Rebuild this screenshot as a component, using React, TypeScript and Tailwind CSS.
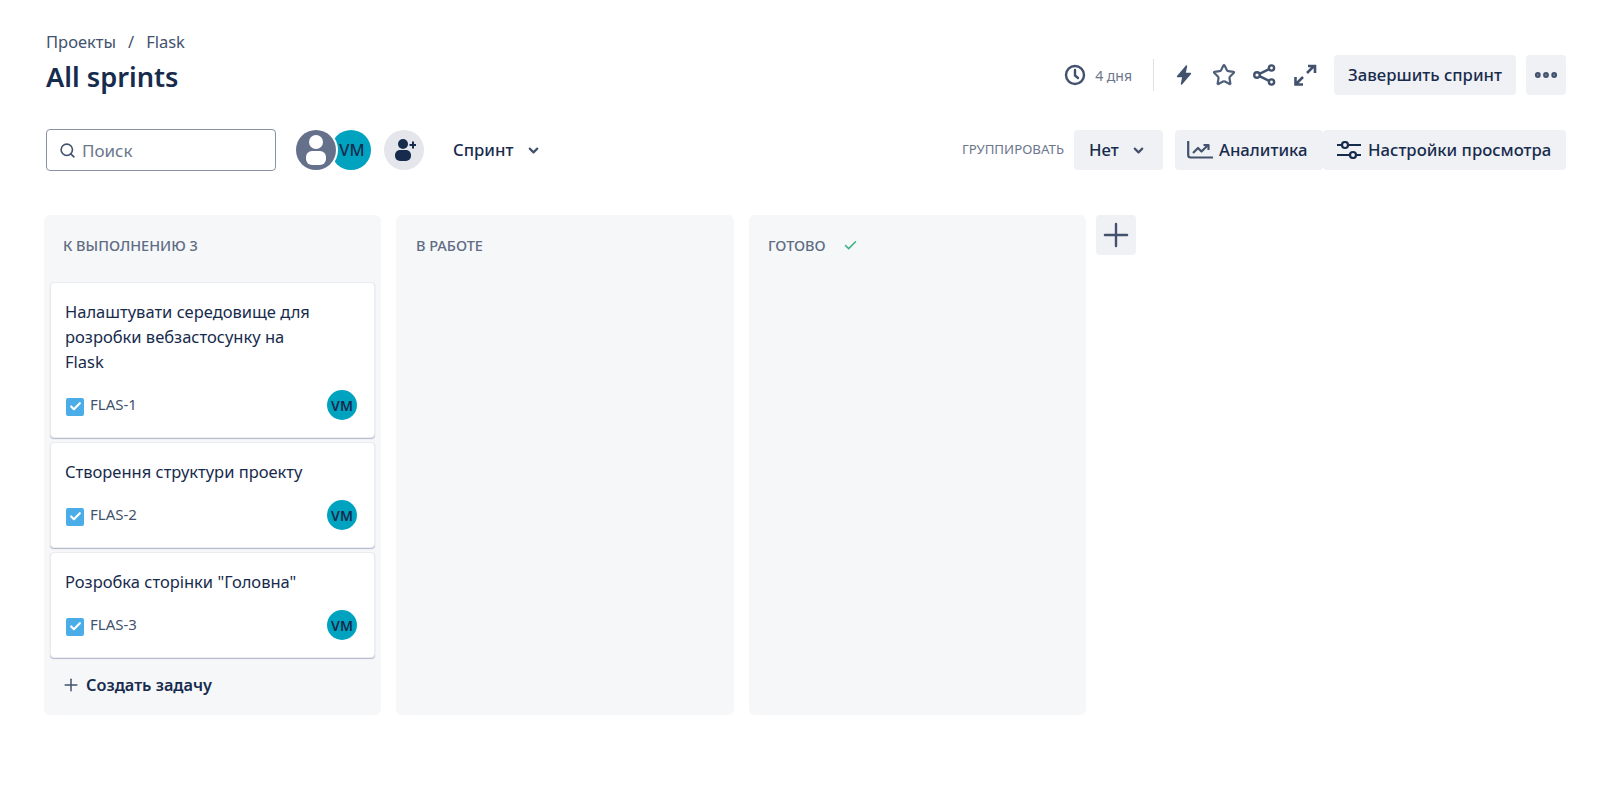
import React from 'react';
import { Check, ChevronDown, Ellipsis, Plus, Search, Star } from 'lucide-react';

const font = { fontFamily: '"Noto Sans", "Open Sans", sans-serif' };

const tasks = [
  { id: 'FLAS-1', title: 'Налаштувати середовище для розробки вебзастосунку на Flask', height: 'h-[156px]' },
  { id: 'FLAS-2', title: 'Створення структури проекту', height: 'h-[106px]' },
  { id: 'FLAS-3', title: 'Розробка сторінки "Головна"', height: 'h-[106px]' },
];

const TaskCard = ({ id, title, height }: { id: string; title: string; height: string }) => (
  <div className={`${height} flex flex-col justify-between rounded-[4px] border border-[#ebecf0] bg-white pt-[16px] pr-[17px] pb-[17px] pl-[15px] shadow-[0_1px_1px_#b3b9c9]`}>
    <div className="-ml-px w-[245px] text-[16.5px] leading-[25px] text-[#172b4d]">{title}</div>
    <div className="flex items-center justify-between">
      <div className="flex items-center gap-[6px]">
        <span className="mt-[3px] flex h-[18px] w-[18px] items-center justify-center rounded-[2px] bg-[#4bade8]">
          <Check size={13} strokeWidth={4} className="text-white" />
        </span>
        <span className="pb-[2px] text-[15px] leading-[18px] text-[#42526e]">{id}</span>
      </div>
      <span className="flex h-[30px] w-[30px] items-center justify-center rounded-full bg-[#00a3bf] text-[14px] font-semibold text-[#172b4d]">VM</span>
    </div>
  </div>
);

const Column = ({ children, className }: { children: React.ReactNode; className: string }) => (
  <div className={`flex h-[500px] flex-col rounded-[6px] bg-[#f6f7f9] ${className}`}>{children}</div>
);

const GrayButton = ({ children, className }: { children: React.ReactNode; className: string }) => (
  <div className={`flex h-[40px] items-center rounded-[4px] bg-[#f0f1f4] text-[16.7px] font-medium text-[#172b4d] ${className}`}>{children}</div>
);

const ClockIcon = () => (
  <svg width="24" height="24" viewBox="0 0 24 24" fill="none" stroke="#42526e" strokeWidth="2.4" strokeLinecap="round" strokeLinejoin="round">
    <circle cx="12" cy="12" r="9" />
    <path d="M12 7v5.5l3 2.5" />
  </svg>
);

const BoltIcon = () => (
  <svg width="24" height="24" viewBox="0 0 24 24" fill="#42526e" stroke="#42526e" strokeWidth="1.4" strokeLinejoin="round">
    <path d="M14.5 3 L5.5 13.5 h5.5 L9.5 21 L18.5 10.5 h-5.5z" />
  </svg>
);

const ShareIcon = () => (
  <svg width="24" height="24" viewBox="0 0 24 24" fill="none" stroke="#42526e" strokeWidth="2.4">
    <circle cx="19.5" cy="5" r="2.6" />
    <circle cx="5" cy="12" r="2.8" />
    <circle cx="19.5" cy="19" r="2.6" />
    <path d="M7.5 10.8l9.6-4.6M7.5 13.2l9.6 4.6" />
  </svg>
);

const ExpandIcon = () => (
  <svg width="24" height="24" viewBox="0 0 24 24" fill="none" stroke="#42526e" strokeWidth="2.6">
    <path d="M14 10l7-7M15 3h7v7" />
    <path d="M10 14l-7 7M2.5 14v7.5H10" />
  </svg>
);

const ChartIcon = () => (
  <svg width="26" height="18" viewBox="0 0 26 18" fill="none" stroke="#42526e" strokeWidth="2.2" strokeLinejoin="round">
    <path d="M1.2 0v14a2.5 2.5 0 0 0 2.5 2.5H26" />
    <path d="M6 12l5-5 3.5 3.5 6-6" />
    <path d="M16.5 4h5v5" />
  </svg>
);

const SlidersIcon = () => (
  <svg width="24" height="18" viewBox="0 0 24 18" fill="none" stroke="#172b4d" strokeWidth="2.2">
    <path d="M0 4h5M11 4h13M0 14h13M19 14h5" />
    <circle cx="8" cy="4" r="3" />
    <circle cx="16" cy="14" r="3" />
  </svg>
);

const AddUserIcon = () => (
  <svg width="24" height="24" viewBox="0 0 24 24" fill="#172b4d">
    <circle cx="11" cy="6" r="5" />
    <rect x="3" y="12" width="16" height="11" rx="5" />
    <path d="M20 3.5h2v2.5h2v2h-2v2.5h-2V8h-2.5V6H20z" />
  </svg>
);

export default function App() {
  return (
    <div className="min-h-[794px] bg-white pt-[30px] pr-[49px] pl-[44px] text-[#172b4d]" style={font}>
      <div className="flex items-start justify-between pl-[2px]">
        <div className="pt-px">
          <div className="flex gap-[12px] text-[16.5px] leading-[22px] text-[#42526e]">
            <span>Проекты</span>
            <span>/</span>
            <span>Flask</span>
          </div>
          <h1 className="mt-[5px] text-[27.2px] leading-[38px] font-semibold">All sprints</h1>
        </div>
        <div className="mt-[25px] flex items-center">
          <ClockIcon />
          <span className="ml-[8px] text-[14px] text-[#6b778c]">4 дня</span>
          <div className="mr-[18px] ml-[21px] h-[32px] w-px bg-[#dfe1e6]" />
          <BoltIcon />
          <Star size={24} strokeWidth={2.2} className="ml-[16px] text-[#505f79]" />
          <span className="ml-[16px]"><ShareIcon /></span>
          <span className="ml-[17px]"><ExpandIcon /></span>
          <GrayButton className="ml-[17px] w-[182px] justify-center">Завершить спринт</GrayButton>
          <GrayButton className="ml-[10px] w-[40px] justify-center">
            <Ellipsis size={28} strokeWidth={3} className="text-[#42526e]" />
          </GrayButton>
        </div>
      </div>

      <div className="mt-[33px] flex items-center justify-between pl-[2px]">
        <div className="flex items-center">
          <div className="flex h-[42px] w-[230px] items-center rounded-[4px] border border-[#8993a4] pl-[12px]">
            <Search size={17} strokeWidth={2.3} className="text-[#42526e]" />
            <span className="ml-[6px] pt-[2px] text-[17px] text-[#6b778c]">Поиск</span>
          </div>
          <div className="ml-[20px] flex items-center">
            <span className="z-10 flex h-[40px] w-[40px] items-center justify-center overflow-hidden rounded-full bg-[#65708a] ring-2 ring-white">
              <svg width="40" height="40" viewBox="0 0 40 40">
                <circle cx="20" cy="12" r="7" fill="#fff" />
                <rect x="10" y="21" width="20" height="14" rx="6" fill="#fff" />
              </svg>
            </span>
            <span className="-ml-[5px] flex h-[40px] w-[40px] items-center justify-center rounded-full bg-[#00a3bf] pl-[2px] text-[16.5px] font-medium">VM</span>
          </div>
          <span className="ml-[13px] flex h-[40px] w-[40px] items-center justify-center rounded-full bg-[#e5e6eb]">
            <AddUserIcon />
          </span>
          <span className="ml-[29px] text-[16.7px] font-medium">Спринт</span>
          <ChevronDown size={15} strokeWidth={3.4} className="ml-[13px] text-[#42526e]" />
        </div>
        <div className="flex items-center">
          <span className="mr-[10px] text-[13.3px] text-[#6b778c]">ГРУППИРОВАТЬ</span>
          <GrayButton className="w-[89px] pl-[15px]">
            Нет
            <ChevronDown size={15} strokeWidth={3.4} className="ml-[12px] text-[#42526e]" />
          </GrayButton>
          <GrayButton className="ml-[12px] w-[148px] gap-[6px] pl-[12px]">
            <ChartIcon />
            Аналитика
          </GrayButton>
          <GrayButton className="w-[243px] gap-[7px] pl-[14px]">
            <SlidersIcon />
            Настройки просмотра
          </GrayButton>
        </div>
      </div>

      <div className="mt-[44px] flex items-start gap-[15px]">
        <Column className="w-[337px]">
          <div className="pt-[21px] pl-[19px] text-[14.5px] leading-[18px] font-medium text-[#5e6c84]">К ВЫПОЛНЕНИЮ 3</div>
          <div className="mt-[28px] flex flex-col gap-[4px] px-[6px]">
            {tasks.map((task) => (
              <TaskCard key={task.id} {...task} />
            ))}
          </div>
          <div className="mt-[16px] flex items-center gap-[5px] pl-[17px] text-[16.3px] leading-[22px] font-semibold">
            <Plus size={20} strokeWidth={1.8} className="text-[#42526e]" />
            Создать задачу
          </div>
        </Column>
        <Column className="w-[338px]">
          <div className="pt-[21px] pl-[20px] text-[14.5px] leading-[18px] font-medium text-[#5e6c84]">В РАБОТЕ</div>
        </Column>
        <Column className="w-[337px]">
          <div className="flex items-center gap-[17px] pt-[21px] pl-[19px] text-[14.5px] leading-[18px] font-medium text-[#5e6c84]">
            ГОТОВО
            <Check size={15} strokeWidth={2.4} className="text-[#36b37e]" />
          </div>
        </Column>
        <div className="-ml-[5px] flex h-[40px] w-[40px] items-center justify-center rounded-[4px] bg-[#f0f1f4]">
          <Plus size={38} strokeWidth={1.5} className="text-[#42526e]" />
        </div>
      </div>
    </div>
  );
}
